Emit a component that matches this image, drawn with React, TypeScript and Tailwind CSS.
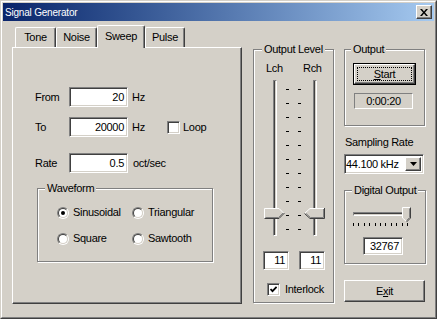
import React from 'react';

const FONT = "font-['Liberation_Sans',Arial,sans-serif] text-[11px] leading-[13px] tracking-[-0.3px] text-black";
const SUNKEN =
  'border border-t-[#808080] border-l-[#808080] border-r-white border-b-white shadow-[inset_1px_1px_0_#404040,inset_-1px_-1px_0_#d4d0c8]';
const RAISED =
  'border border-t-white border-l-white border-r-[#404040] border-b-[#404040] shadow-[inset_-1px_-1px_0_#808080,inset_1px_1px_0_#d4d0c8] bg-[#d4d0c8]';
const GROUP = 'border border-[#808080] shadow-[inset_1px_1px_0_#fff,1px_1px_0_#fff]';
const LEGEND = 'px-[2px] bg-[#d4d0c8] whitespace-nowrap';

const TABS = [
  { label: 'Tone', width: 'w-[41px]' },
  { label: 'Noise', width: 'w-[41px]' },
  { label: 'Sweep', width: 'w-[48px]', active: true },
  { label: 'Pulse', width: 'w-[40px]' },
];

function Edit({ value, className }: { value: string; className: string }) {
  return (
    <div className={`bg-white flex items-center justify-end pr-[3px] ${SUNKEN} ${className}`}>
      {value}
    </div>
  );
}

function Check({ checked }: { checked?: boolean }) {
  return (
    <span className={`w-[13px] h-[13px] bg-white flex items-center justify-center shrink-0 ${SUNKEN}`}>
      {checked && (
        <svg width="7" height="7" viewBox="0 0 7 7">
          <path d="M0.5 3 L2.5 5.2 L6.6 0.8" stroke="#000" strokeWidth="1.8" fill="none" />
        </svg>
      )}
    </span>
  );
}

function Radio({ checked }: { checked?: boolean }) {
  return (
    <span className="w-[12px] h-[12px] rounded-full border border-t-[#808080] border-l-[#808080] border-r-white border-b-white flex shrink-0">
      <span className="flex-1 rounded-full border border-t-[#404040] border-l-[#404040] border-r-[#d4d0c8] border-b-[#d4d0c8] bg-white flex items-center justify-center">
        {checked && <span className="w-[4px] h-[4px] rounded-full bg-black" />}
      </span>
    </span>
  );
}

function RadioItem({ label, checked }: { label: string; checked?: boolean }) {
  return (
    <div className="flex items-center h-[13px]">
      <Radio checked={checked} />
      <span className="ml-[4px]">{label}</span>
    </div>
  );
}

// vertical trackbar thumb, pointing right or left
function VThumb({ dir }: { dir: 'right' | 'left' }) {
  if (dir === 'right') {
    return (
      <svg width="21" height="11" viewBox="0 0 21 11">
        <polygon points="0,0 15,0 20.5,5.5 15,11 0,11" fill="#d4d0c8" />
        <polyline points="0.5,10.5 0.5,0.5 15,0.5 20,5.5" fill="none" stroke="#fff" />
        <polyline points="0.5,10.5 15,10.5 20.5,5" fill="none" stroke="#404040" />
        <polyline points="1.5,9.5 14.5,9.5 19,5" fill="none" stroke="#808080" />
      </svg>
    );
  }
  return (
    <svg width="21" height="11" viewBox="0 0 21 11">
      <polygon points="21,0 6,0 0.5,5.5 6,11 21,11" fill="#d4d0c8" />
      <polyline points="0.5,5.5 6,0.5 20.5,0.5" fill="none" stroke="#fff" />
      <polyline points="0.5,5.5 6,10.5 20.5,10.5 20.5,0" fill="none" stroke="#404040" />
      <polyline points="2,5.5 6.5,9.5 19.5,9.5 19.5,1" fill="none" stroke="#808080" />
    </svg>
  );
}

function VSlider({ thumb }: { thumb: 'right' | 'left' }) {
  return (
    <div className="relative w-[21px] h-full flex justify-center">
      <div className="w-[4px] h-full border border-t-[#808080] border-l-[#808080] border-r-white border-b-white shadow-[inset_1px_0_0_#404040,inset_-1px_0_0_#d4d0c8]" />
      <div className="absolute left-0 top-[128px] flex">
        <VThumb dir={thumb} />
      </div>
    </div>
  );
}

function Ticks({ className }: { className: string }) {
  return (
    <div className={`w-[3px] h-full flex flex-col justify-between pt-[9px] pb-[6px] ${className}`}>
      {Array.from({ length: 11 }).map((_, i) => (
        <div key={i} className="h-[1px] bg-black" />
      ))}
    </div>
  );
}

function TitleBar() {
  return (
    <div className="h-[18px] flex items-center bg-linear-to-r from-[#0a246a] to-[#a6caf0] pl-[2px] pr-[2px]">
      <span className="text-white text-[10px] tracking-[-0.2px]">Signal Generator</span>
      <div className={`ml-auto w-[16px] h-[14px] flex items-center justify-center ${RAISED}`}>
        <svg width="8" height="7" viewBox="0 0 8 7">
          <path d="M0 0h2l2 2.5L6 0h2L5 3.5 8 7H6L4 4.5 2 7H0l3-3.5z" fill="#000" />
        </svg>
      </div>
    </div>
  );
}

function TabControl() {
  return (
    <div className="w-[230px] flex flex-col">
      <div className="h-[22px] flex items-end pl-[3px]">
        {TABS.map((t) =>
          t.active ? (
            <div
              key={t.label}
              className={`${t.width} h-[23px] -mb-[1px] relative z-10 bg-[#d4d0c8] rounded-t-[2px] border-t border-l border-r border-t-white border-l-white border-r-[#404040] shadow-[inset_-1px_0_0_#808080] flex items-center justify-center pb-[2px]`}
            >
              {t.label}
            </div>
          ) : (
            <div
              key={t.label}
              className={`${t.width} h-[20px] rounded-t-[2px] border-t border-l border-r border-t-white border-l-white border-r-[#404040] shadow-[inset_-1px_0_0_#808080] flex items-center justify-center`}
            >
              {t.label}
            </div>
          )
        )}
      </div>
      <div className="h-[257px] border border-t-white border-l-white border-r-[#404040] border-b-[#404040] shadow-[inset_-1px_-1px_0_#808080] pl-[22px] pt-[39px]">
        {/* From */}
        <div className="flex items-center h-[20px]">
          <span className="w-[34px]">From</span>
          <Edit value="20" className="w-[59px] h-[20px]" />
          <span className="ml-[4px]">Hz</span>
        </div>
        {/* To */}
        <div className="flex items-center h-[20px] mt-[10px]">
          <span className="w-[34px]">To</span>
          <Edit value="20000" className="w-[59px] h-[20px]" />
          <span className="ml-[4px] w-[35px]">Hz</span>
          <Check />
          <span className="ml-[3px]">Loop</span>
        </div>
        {/* Rate */}
        <div className="flex items-center h-[20px] mt-[16px]">
          <span className="w-[34px]">Rate</span>
          <Edit value="0.5" className="w-[59px] h-[20px]" />
          <span className="ml-[5px]">oct/sec</span>
        </div>
        {/* Waveform */}
        <fieldset className={`mt-[9px] ml-[2px] w-[176px] pt-[11px] pb-[16px] ${GROUP}`}>
          <legend className={`ml-[7px] ${LEGEND}`}>Waveform</legend>
          <div className="grid grid-cols-[75px_auto] gap-y-[13px] pl-[19px]">
            <RadioItem label="Sinusoidal" checked />
            <RadioItem label="Triangular" />
            <RadioItem label="Square" />
            <RadioItem label="Sawtooth" />
          </div>
        </fieldset>
      </div>
    </div>
  );
}

function OutputLevel() {
  return (
    <fieldset className={`ml-[11px] mt-[18px] w-[81px] self-start pb-[6px] ${GROUP}`}>
      <legend className={`ml-[8px] ${LEGEND}`}>Output Level</legend>
      <div className="flex mt-[6px] pl-[12px] h-[13px]">
        <span className="w-[37px]">Lch</span>
        <span>Rch</span>
      </div>
      <div className="flex h-[156px] mt-[5px] pl-[10px]">
        <VSlider thumb="right" />
        <Ticks className="ml-[1px]" />
        <Ticks className="ml-[9px]" />
        <div className="ml-[3px] h-full">
          <VSlider thumb="left" />
        </div>
      </div>
      <div className="flex mt-[15px] pl-[9px] gap-[10px]">
        <Edit value="11" className="w-[26px] h-[19px] pr-[2px]" />
        <Edit value="11" className="w-[26px] h-[19px] pr-[2px]" />
      </div>
      <div className="flex items-center mt-[13px] pl-[13px] h-[13px]">
        <Check checked />
        <span className="ml-[5px]">Interlock</span>
      </div>
    </fieldset>
  );
}

function RightColumn() {
  return (
    <div className="ml-[10px] mt-[18px] w-[82px] flex flex-col items-start">
      <fieldset className={`w-[81px] pt-[7px] pb-[16px] ${GROUP}`}>
        <legend className={`ml-[6px] ${LEGEND}`}>Output</legend>
        <div className="pl-[8px]">
          <div className="w-[63px] h-[22px] border border-black flex">
            <div className={`flex-1 p-[2px] flex ${RAISED}`}>
              <div className="flex-1 border border-dotted border-black flex items-center justify-center">
                <span>
                  <span className="underline underline-offset-[1px]">S</span>tart
                </span>
              </div>
            </div>
          </div>
          <div className="mt-[8px] ml-[1px] w-[59px] h-[16px] border border-t-[#808080] border-l-[#808080] border-r-white border-b-white flex items-center justify-center">
            0:00:20
          </div>
        </div>
      </fieldset>

      <span className="mt-[10px] ml-[1px]">Sampling Rate</span>

      <div className={`mt-[5px] w-[80px] h-[20px] bg-white flex items-stretch ${SUNKEN} p-[2px]`}>
        <span className="flex-1 flex items-center -ml-[1px]">44.100 kHz</span>
        <div className={`w-[16px] flex items-center justify-center ${RAISED}`}>
          <svg width="7" height="4" viewBox="0 0 7 4">
            <path d="M0 0h7L3.5 4z" fill="#000" />
          </svg>
        </div>
      </div>

      <fieldset className={`mt-[10px] w-[82px] pt-[10px] pb-[8px] ${GROUP}`}>
        <legend className={`ml-[7px] ${LEGEND}`}>Digital Output</legend>
        <div className="pl-[8px] flex flex-col">
          <div className="relative w-[58px] h-[15px] pt-[5px]">
            <div className="w-[55px] h-[4px] border border-t-[#808080] border-l-[#808080] border-r-white border-b-white shadow-[inset_0_1px_0_#404040,inset_0_-1px_0_#d4d0c8]" />
            <div className="absolute right-0 top-0 flex">
              <svg width="9" height="15" viewBox="0 0 9 15">
                <polygon points="0,0 9,0 9,11 4.5,15 0,11" fill="#d4d0c8" />
                <polyline points="4.5,14.5 0.5,11 0.5,0.5 8.5,0.5" fill="none" stroke="#fff" />
                <polyline points="8.5,0.5 8.5,11 4.5,15" fill="none" stroke="#404040" />
                <polyline points="7.5,1.5 7.5,10.5 4.5,13.5" fill="none" stroke="#808080" />
              </svg>
            </div>
          </div>
          <div className="mt-[1px] w-[55px] h-[3px] flex justify-between">
            {Array.from({ length: 11 }).map((_, i) => (
              <div key={i} className="w-[1px] h-[3px] bg-black" />
            ))}
          </div>
          <Edit value="32767" className="mt-[11px] ml-[10px] w-[40px] h-[18px] pr-[2px]" />
        </div>
      </fieldset>

      <button className={`mt-[16px] w-[81px] h-[22px] flex items-center justify-center ${RAISED}`}>
        <span>
          E<span className="underline underline-offset-[1px]">x</span>it
        </span>
      </button>
    </div>
  );
}

export default function App() {
  return (
    <div
      className={`w-[437px] h-[319px] bg-[#d4d0c8] border border-t-[#d4d0c8] border-l-[#d4d0c8] border-r-[#404040] border-b-[#404040] ${FONT}`}
    >
      <div className="h-full border border-t-white border-l-white border-r-[#808080] border-b-[#808080] p-[1px] flex flex-col">
        <TitleBar />
        <div className="flex-1 flex items-start pl-[9px] pt-[4px]">
          <TabControl />
          <OutputLevel />
          <RightColumn />
        </div>
      </div>
    </div>
  );
}
